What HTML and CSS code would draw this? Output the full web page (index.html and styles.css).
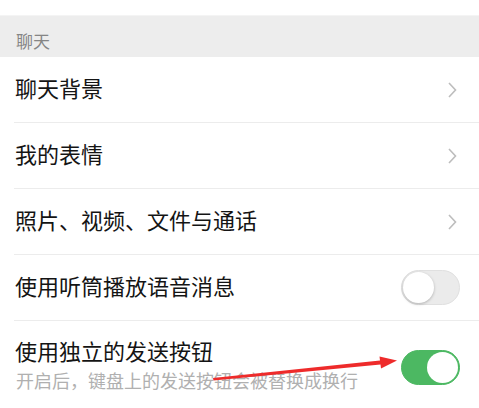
FILE: index.html
```html
<!DOCTYPE html>
<html lang="zh-CN">
<head>
<meta charset="utf-8">
<link rel="stylesheet" href="styles.css">
</head>
<body>
<div class="page">
  <div class="top-strip"></div>
  <div class="section-header">聊天</div>
  <div class="list">
    <div class="row">
      <span class="label">聊天背景</span>
      <svg class="chevron" width="9" height="16" viewBox="0 0 9 16"><path d="M1 1 L7.5 8 L1 15" fill="none" stroke="#bdbdbd" stroke-width="1.6"/></svg>
    </div>
    <div class="row">
      <span class="label">我的表情</span>
      <svg class="chevron" width="9" height="16" viewBox="0 0 9 16"><path d="M1 1 L7.5 8 L1 15" fill="none" stroke="#bdbdbd" stroke-width="1.6"/></svg>
    </div>
    <div class="row">
      <span class="label">照片、视频、文件与通话</span>
      <svg class="chevron" width="9" height="16" viewBox="0 0 9 16"><path d="M1 1 L7.5 8 L1 15" fill="none" stroke="#bdbdbd" stroke-width="1.6"/></svg>
    </div>
    <div class="row">
      <span class="label">使用听筒播放语音消息</span>
      <div class="toggle"><span class="knob"></span></div>
    </div>
    <div class="row row-tall">
      <div class="texts">
        <span class="title">使用独立的发送按钮</span>
        <span class="sub">开启后，键盘上的发送按钮会被替换成换行</span>
      </div>
      <div class="toggle on"><span class="knob"></span></div>
    </div>
  </div>
  <svg class="arrow" width="479" height="408" viewBox="0 0 479 408">
    <path d="M213 378 L380 360.5 L379.5 356.5 L397 360.5 L381 368.5 L380.5 364.5 L213.5 380.5 Z" fill="#ee2b2b"/>
  </svg>
</div>
</body>
</html>
```
FILE: styles.css
```css
html, body {
  margin: 0;
  padding: 0;
  background: #ffffff;
}
.page {
  position: relative;
  width: 479px;
  height: 408px;
  overflow: hidden;
  font-family: "Noto Sans CJK SC", "Noto Sans", sans-serif;
}
.top-strip {
  height: 15px;
  background: #ffffff;
  border-bottom: 1px solid #f4f4f4;
}
.section-header {
  height: 41px;
  box-sizing: border-box;
  background: #ededed;
  color: #858585;
  font-size: 17px;
  line-height: 20px;
  padding: 15px 0 0 16px;
}
.list {
  background: #ffffff;
}
.row {
  height: 65px;
  margin-left: 14px;
  padding-left: 1px;
  padding-right: 20px;
  border-bottom: 1px solid #ececec;
  display: flex;
  align-items: center;
  justify-content: space-between;
}
.row-tall {
  height: 89px;
  border-bottom: none;
  align-items: flex-start;
}
.label {
  font-size: 22px;
  line-height: 26px;
  color: #141414;
  margin-bottom: 5px;
}
.title {
  font-size: 22px;
  line-height: 26px;
  color: #141414;
}
.chevron {
  margin-right: 2px;
}
.texts {
  display: flex;
  flex-direction: column;
  padding-top: 16px;
  gap: 6px;
}
.sub {
  font-size: 18px;
  line-height: 22px;
  color: #b0b0b0;
  margin-left: 1px;
}
.toggle {
  width: 59px;
  height: 35px;
  box-sizing: border-box;
  border-radius: 18px;
  background: #ebebeb;
  border: 1px solid #e0e0e0;
  display: flex;
  align-items: center;
  justify-content: flex-start;
  padding: 0 1px;
  margin-right: -1px;
}
.toggle .knob {
  width: 31px;
  height: 31px;
  border-radius: 50%;
  background: #ffffff;
  box-shadow: 0 1px 3px rgba(0,0,0,0.25);
}
.toggle.on {
  background: #4cb862;
  border-color: #4cb862;
  justify-content: flex-end;
  margin-top: 29px;
}
.toggle.on .knob {
  box-shadow: none;
}
.arrow {
  position: absolute;
  left: 0;
  top: 0;
  pointer-events: none;
}
```
